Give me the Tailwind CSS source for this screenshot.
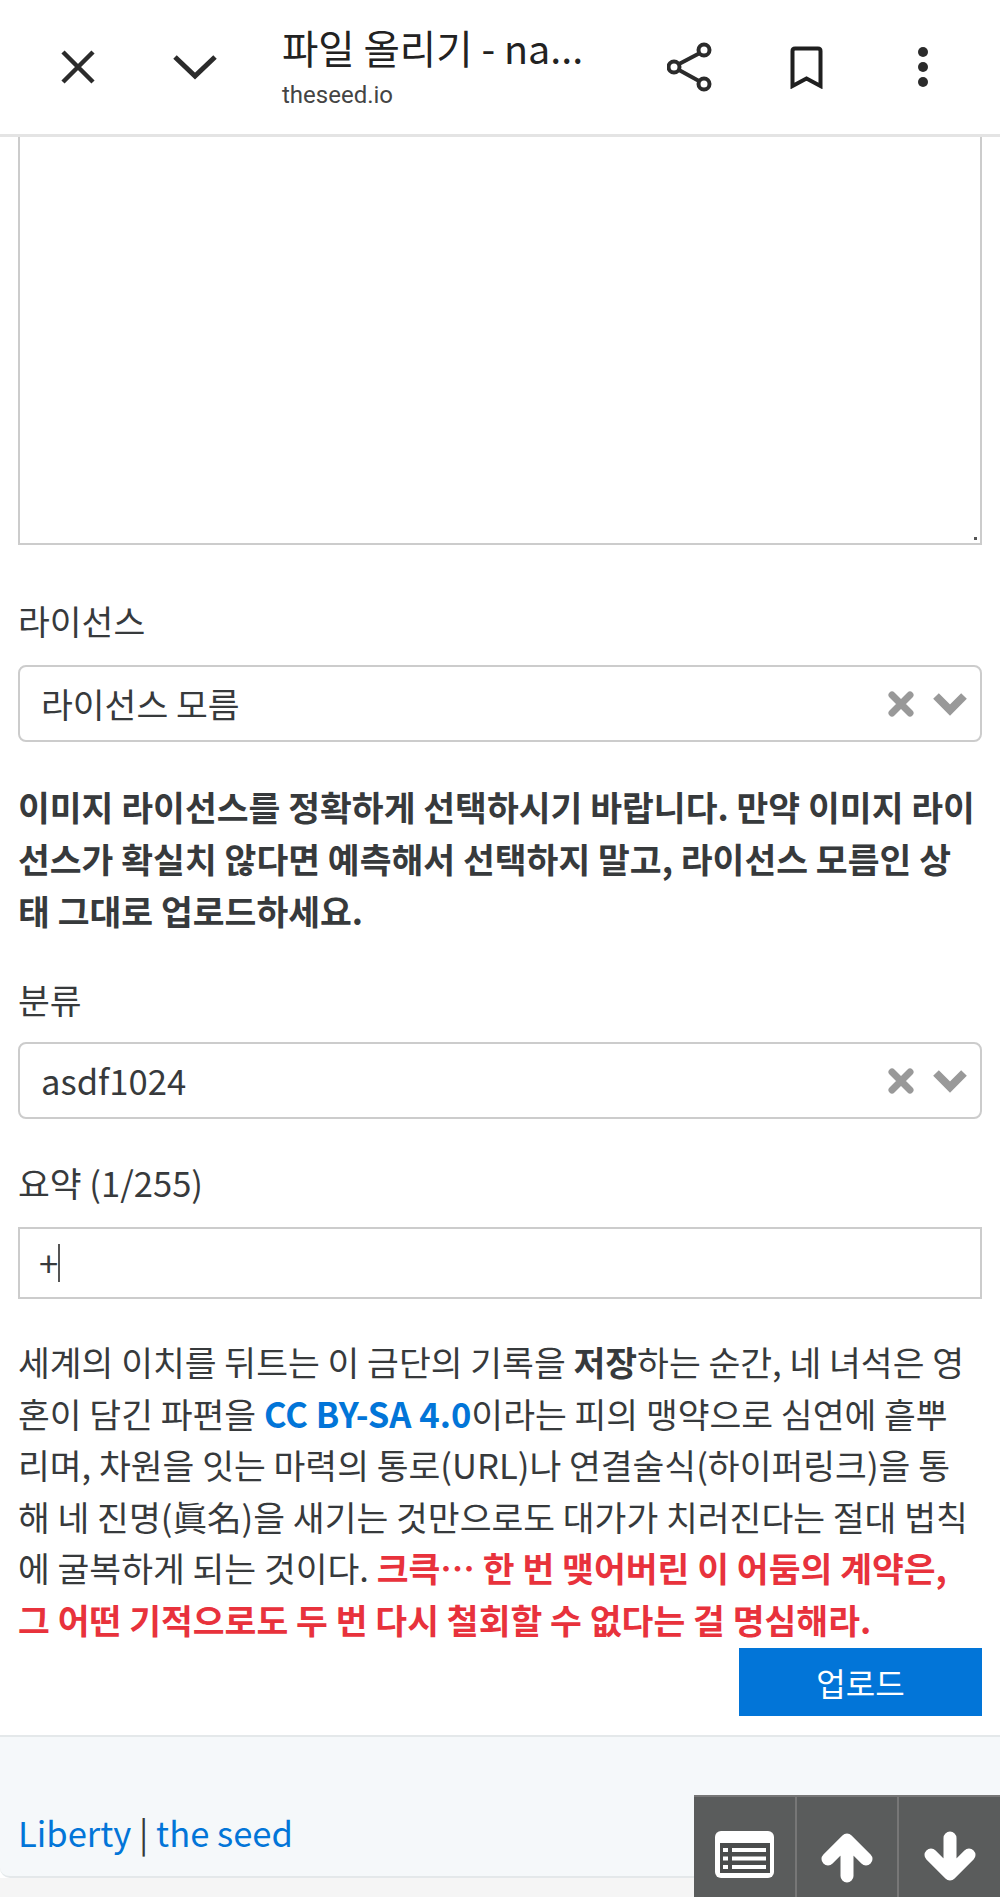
<!DOCTYPE html>
<html><head><meta charset="utf-8"><script src="https://cdn.jsdelivr.net/npm/@tailwindcss/browser@4"></script></head>
<body class="w-[1000px] h-[1897px] overflow-hidden bg-[#f5f5f5] font-['Noto_Sans_CJK_KR','Noto_Sans',sans-serif] text-[#373a3c]">
<div class="bg-white">
<header class="h-[137px] border-b-[3px] border-[#e4e4e4] flex items-center bg-white">
  <div class="w-[155px] flex justify-center"><svg class="w-[34px] h-[34px]" viewBox="0 0 34 34" fill="none" stroke="#2b2b2b" stroke-width="4.5"><path d="M2 2 32 32M32 2 2 32"/></svg></div>
  <div class="w-[80px] flex justify-center"><svg class="w-[44px] h-[26px]" viewBox="0 0 44 26" fill="none" stroke="#2b2b2b" stroke-width="5"><path d="M2 3 22 22 42 3"/></svg></div>
  <div class="ml-[47px] w-[320px] -mt-[3px]"><div class="text-[39.5px] leading-[50px] text-[#222]">파일 올리기 - na...</div><div class="text-[24px] leading-[30px] mt-[8px] text-[#444] font-['Roboto']">theseed.io</div></div>
  <svg class="ml-[65px] w-[46px] h-[50px]" viewBox="0 0 46 50" fill="none" stroke="#2b2b2b" stroke-width="4"><circle cx="7" cy="25" r="5.5"/><circle cx="37" cy="8" r="5.5"/><circle cx="37" cy="42" r="5.5"/><path d="M12 22 32 11.5M12 28 32 39"/></svg>
  <svg class="ml-[77px] w-[33px] h-[43px]" viewBox="0 0 33 43" fill="none" stroke="#1f1f1f" stroke-width="4"><path d="M2.5 40V5Q2.5 2.5 5 2.5H28Q30.5 2.5 30.5 5V40L16.5 32.5Z"/></svg>
  <div class="ml-[95px] flex flex-col gap-[5px]"><span class="w-[10px] h-[10px] rounded-full bg-[#2b2b2b]"></span><span class="w-[10px] h-[10px] rounded-full bg-[#2b2b2b]"></span><span class="w-[10px] h-[10px] rounded-full bg-[#2b2b2b]"></span></div>
</header>
<main class="px-[18px]">
  <div class="h-[408px] border-2 border-t-0 border-[#ccc] relative"><span class="absolute right-[3px] bottom-[3px] w-[3px] h-[3px] bg-[#555]"></span></div>
  <label class="block mt-[50px] text-[34.6px] leading-[50px]">라이선스</label>
  <div class="mt-[20px] h-[77px] border-2 border-[#ccc] rounded-[8px] flex items-center pl-[21px] pr-[13px] text-[34.6px]">
    <span class="flex-1">라이선스 모름</span>
    <svg class="w-[26px] h-[26px]" viewBox="0 0 26 26" stroke="#999" stroke-width="7" stroke-linecap="round"><path d="M4 4 22 22M22 4 4 22"/></svg>
    <svg class="ml-[19px] w-[34px] h-[24px]" viewBox="0 0 34 24" fill="none" stroke="#999" stroke-width="8"><path d="M3 4 17 18 31 4"/></svg>
  </div>
  <p class="mt-[38px] text-[34.6px] leading-[52px] font-bold whitespace-nowrap">이미지 라이선스를 정확하게 선택하시기 바랍니다. 만약 이미지 라이<br>선스가 확실치 않다면 예측해서 선택하지 말고, 라이선스 모름인 상<br>태 그대로 업로드하세요.</p>
  <label class="block mt-[38px] text-[34.6px] leading-[50px]">분류</label>
  <div class="mt-[18px] h-[77px] border-2 border-[#ccc] rounded-[8px] flex items-center pl-[21px] pr-[13px] text-[34.6px]">
    <span class="flex-1">asdf1024</span>
    <svg class="w-[26px] h-[26px]" viewBox="0 0 26 26" stroke="#999" stroke-width="7" stroke-linecap="round"><path d="M4 4 22 22M22 4 4 22"/></svg>
    <svg class="ml-[19px] w-[34px] h-[24px]" viewBox="0 0 34 24" fill="none" stroke="#999" stroke-width="8"><path d="M3 4 17 18 31 4"/></svg>
  </div>
  <label class="block mt-[38px] text-[34.6px] leading-[50px]">요약 (1/255)</label>
  <div class="mt-[20px] h-[72px] border-2 border-[#ccc] flex items-center pl-[19px] text-[34.6px]">+<span class="w-[2px] h-[38px] bg-[#555]"></span></div>
  <p class="mt-[37px] text-[34.6px] leading-[51.6px] whitespace-nowrap">세계의 이치를 뒤트는 이 금단의 기록을 <b>저장</b>하는 순간, 네 녀석은 영<br>혼이 담긴 파편을 <b class="text-[#0275d8]">CC BY-SA 4.0</b>이라는 피의 맹약으로 심연에 흩뿌<br>리며, 차원을 잇는 마력의 통로(URL)나 연결술식(하이퍼링크)을 통<br>해 네 진명(眞名)을 새기는 것만으로도 대가가 치러진다는 절대 법칙<br>에 굴복하게 되는 것이다. <b class="text-[#e8323c]">크큭… 한 번 맺어버린 이 어둠의 계약은,<br>그 어떤 기적으로도 두 번 다시 철회할 수 없다는 걸 명심해라.</b></p>
  <div class="flex justify-end mt-[2px]"><button class="w-[243px] h-[68px] bg-[#0275d8] text-white text-[32px]">업로드</button></div>
</main>
</div>
<footer class="pt-[19px] bg-white">
<div class="relative h-[143px] bg-[#f5f8fa] border-y-2 border-[#e4e8ea] rounded-bl-[10px]">
  <div class="pl-[18px] pt-[70px] text-[34.6px] leading-[50px]"><a class="text-[#0275d8]">Liberty</a> | <a class="text-[#0275d8]">the seed</a></div>
</div></footer>
<div class="absolute left-[694px] top-[1795px] w-[306px] h-[102px] flex bg-[#5a5c5c] border-t-2 border-[#777]">
    <div class="w-[101px] flex justify-center pt-[34px]"><svg class="w-[59px] h-[47px]" viewBox="0 0 59 47"><rect width="59" height="47" rx="6" fill="#fff"/><rect x="5" y="12" width="50" height="30" fill="#4a4c4c"/><path d="M17 19H51M17 27.5H51M17 36H51" stroke="#fff" stroke-width="4"/><path d="M8 19H13M8 27.5H13M8 36H13" stroke="#fff" stroke-width="4"/></svg></div>
    <div class="w-[102px] flex justify-center pt-[36px] border-l-2 border-[#777]"><svg class="w-[52px] h-[50px]" viewBox="0 0 52 50" fill="none" stroke="#fff" stroke-width="13" stroke-linecap="round" stroke-linejoin="round"><path d="M7 26 26 7 45 26M26 8V43"/></svg></div>
    <div class="w-[103px] flex justify-center pt-[34px] border-l-2 border-[#777]"><svg class="w-[52px] h-[50px]" viewBox="0 0 52 50" fill="none" stroke="#fff" stroke-width="13" stroke-linecap="round" stroke-linejoin="round"><path d="M7 24 26 43 45 24M26 42V7"/></svg></div>
</div>
</body></html>
